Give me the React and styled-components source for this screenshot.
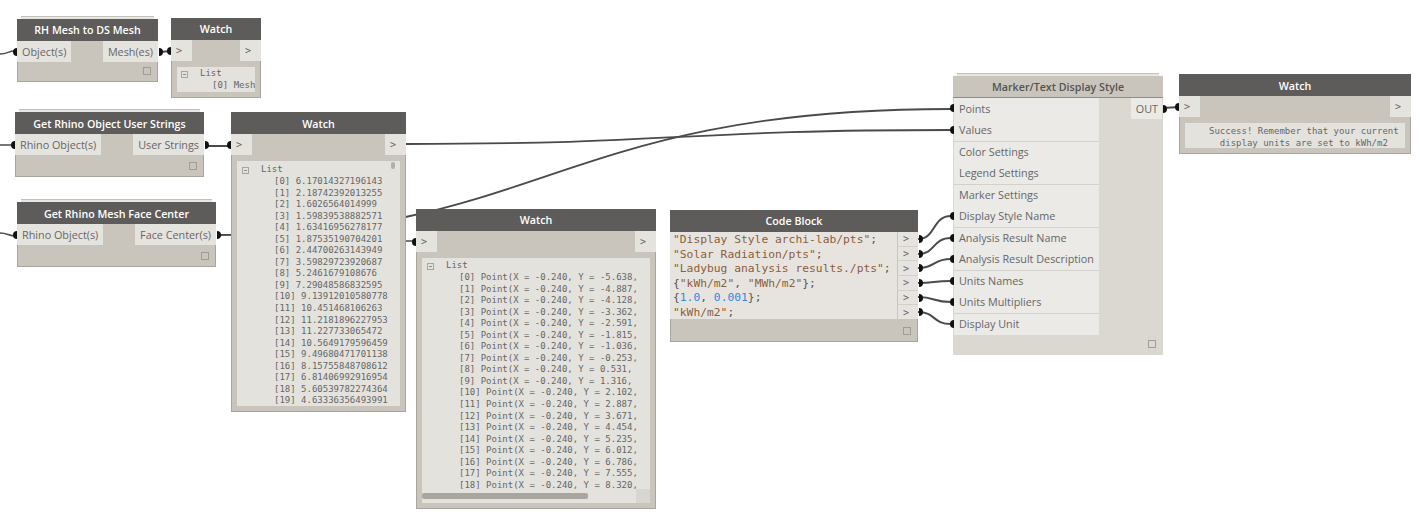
import React from "react";
import styled, { createGlobalStyle } from "styled-components";

const GlobalStyle = createGlobalStyle`
  html, body { margin: 0; padding: 0; background: #fff; }
  body { font-family: "Open Sans", "Liberation Sans", sans-serif; }
`;

const Canvas = styled.div`
  position: relative;
  width: 1420px;
  height: 521px;
  overflow: hidden;
  background: #fff;
`;

const WireLayer = styled.svg`
  position: absolute;
  left: 0;
  top: 0;
`;

/* nodes sit on a free canvas, so they are the one thing placed by coordinates */
const Node = styled.div`
  position: absolute;
  left: ${(p) => p.$x}px;
  top: ${(p) => p.$y}px;
  width: ${(p) => p.$w}px;
  height: ${(p) => p.$h}px;
  box-sizing: border-box;
  display: flex;
  flex-direction: column;
  background: ${(p) => (p.$light ? "#dbd8d2" : "#c9c5bd")};
  border: 1px solid ${(p) => (p.$light ? "#dbd8d2" : "#a8a59f")};
  border-top: none;

  ${(p) =>
    p.$stacked &&
    `&::before {
      content: "";
      position: absolute;
      left: 3px;
      right: 3px;
      top: -3px;
      height: 2px;
      background: #e8e6e2;
      border-top: 1px solid #c4c1bb;
    }`}
`;

const Header = styled.div`
  flex: none;
  height: 22px;
  box-sizing: border-box;
  margin: 0 -1px;
  display: flex;
  align-items: center;
  justify-content: center;
  padding-top: ${(p) => (p.$low ? 1 : 0)}px;
  padding-bottom: ${(p) => (p.$low || p.$light ? 0 : 1)}px;
  background: ${(p) => (p.$light ? "#c9c5bd" : "#5e5c5a")};
  border-bottom: ${(p) => (p.$light ? "1px solid #8f8c86" : "none")};
  color: ${(p) => (p.$light ? "#55534f" : "#fff")};
  font-size: 10.7px;
  font-weight: 600;
  white-space: nowrap;
`;

const PortRow = styled.div`
  flex: none;
  height: 21px;
  display: flex;
  justify-content: space-between;
`;

const Port = styled.div`
  position: relative;
  height: 21px;
  padding: 0 5px;
  display: flex;
  align-items: center;
  background: #e5e3de;
  color: #666;
  font-size: 10.8px;
  white-space: nowrap;
  ${(p) => p.$side === "out" && "margin-right: -1px;"}
  ${(p) => p.$side === "in" && "margin-left: -1px;"}
`;

const ArrowPort = styled(Port)`
  width: 21px;
  box-sizing: border-box;
  padding: 0 0 0 5px;
  font-family: "DejaVu Sans Mono", monospace;
  font-size: 10px;
`;

const Pin = styled.span`
  position: absolute;
  top: 50%;
  margin-top: -4px;
  width: 4px;
  height: 8px;
  background: #111;
  ${(p) =>
    p.$side === "in"
      ? "left: -4px; border-radius: 4px 0 0 4px;"
      : "right: -5px; border-radius: 0 4px 4px 0;"}
`;

const Footer = styled.div`
  flex: 1;
  display: flex;
  align-items: flex-end;
  justify-content: flex-end;
  padding: 0 6px 6px 0;
`;

const Grip = styled.span`
  width: 8px;
  height: 8px;
  box-sizing: border-box;
  border: 1px solid #a09d96;
`;

const ListPanel = styled.div`
  position: relative;
  flex: 1;
  margin: 6px 5px 5px;
  padding: ${(p) => p.$pad || "0"};
  background: #e4e2dd;
  overflow: hidden;
  font-family: "DejaVu Sans Mono", monospace;
  font-size: 9px;
  line-height: 11.55px;
  color: #666;
  white-space: pre;
`;

const ListHead = styled.div`
  display: flex;
  align-items: center;
  height: 12px;
  padding-left: ${(p) => p.$indent}px;
  gap: ${(p) => p.$gap}px;
`;

const Toggle = styled.span`
  position: relative;
  width: 7px;
  height: 7px;
  box-sizing: border-box;
  border: 1px solid #a8a59f;
  &::after {
    content: "";
    position: absolute;
    left: 1px;
    right: 1px;
    top: 2px;
    height: 1px;
    background: #8f8c86;
  }
`;

const ListRow = styled.div`
  padding-left: ${(p) => p.$indent}px;
`;

const ScrollDot = styled.span`
  position: absolute;
  right: 5px;
  top: 1px;
  width: 4px;
  height: 7px;
  border-radius: 2px;
  background: #b3b0aa;
`;

const HScroll = styled.div`
  position: absolute;
  left: 0;
  right: 0;
  bottom: 0;
  height: 14px;
  background: #e4e2dd;
`;

const HThumb = styled.span`
  position: absolute;
  left: 0;
  top: 4px;
  width: 166px;
  height: 6px;
  border-radius: 2px;
  background: #a9a6a0;
`;

const HCorner = styled.span`
  position: absolute;
  right: 0;
  top: 0;
  width: 14px;
  height: 14px;
  background: #d9d6d1;
`;

const CodeBody = styled.div`
  flex: none;
  height: 87px;
  display: flex;
  margin: 0 -1px;
`;

const CodeLines = styled.div`
  flex: 1;
  padding: 1px 0 0 3px;
  background: #e7e4e0;
  font-family: "DejaVu Sans Mono", monospace;
  font-size: 11.3px;
  line-height: 14.6px;
  color: #555;
  white-space: pre;
`;

const Str = styled.span`
  color: #8b5e3c;
`;

const Num = styled.span`
  color: #2f8ae0;
`;

const CodeOuts = styled.div`
  flex: none;
  width: 21px;
  display: flex;
  flex-direction: column;
`;

const CodeOut = styled.div`
  position: relative;
  flex: 1;
  display: flex;
  align-items: center;
  padding-left: 5px;
  background: #e7e4e0;
  border-left: 1px solid #c9c5bd;
  border-top: 1px solid #d3d0ca;
  font-family: "DejaVu Sans Mono", monospace;
  font-size: 10px;
  color: #666;
  &:first-child {
    border-top: none;
  }
`;

const MarkerColumns = styled.div`
  flex: 1;
  display: flex;
  justify-content: space-between;
  align-items: flex-start;
`;

const MarkerInputs = styled.div`
  width: 145px;
  padding-bottom: 0.4px;
  background: #ebeae6;
`;

const MarkerPort = styled.div`
  position: relative;
  top: -0.4px;
  height: 21.5px;
  box-sizing: border-box;
  padding-left: 5px;
  display: flex;
  align-items: center;
  color: #666;
  font-size: 10.8px;
  white-space: nowrap;
  ${(p) => p.$rule && "border-top: 1px solid #d3d1cb;"}
`;

const MarkerOut = styled(Port)`
  padding: 0 4px 0 5px;
  background: #ebeae6;
`;

const mesh = ["[0] Mesh"];
const strings = [
  "6.17014327196143", "2.18742392013255", "1.6026564014999", "1.59839538882571",
  "1.63416956278177", "1.87535190704201", "2.44700263143949", "3.59829723920687",
  "5.2461679108676", "7.29048586832595", "9.13912010580778", "10.451468106263",
  "11.2181896227953", "11.227733065472", "10.5649179596459", "9.49680471701138",
  "8.15755848708612", "6.81406992916954", "5.60539782274364", "4.63336356493991",
];
const pointY = [
  "-5.638", "-4.887", "-4.128", "-3.362", "-2.591", "-1.815", "-1.036", "-0.253", "0.531",
  "1.316", "2.102", "2.887", "3.671", "4.454", "5.235", "6.012", "6.786", "7.555", "8.320",
];

const wires = [
  ["M0,54 C8,54 8,51 15,51", 1.5],
  ["M160,52 L171,51", 2],
  ["M0,145 L15,145", 1.5],
  ["M206,146 L231,146", 2],
  ["M0,233 C8,233 8,236 16,236", 1.5],
  ["M218,235 C540,235 560,109 951,109", 1.8],
  ["M406,144 C680,144 680,130 951,130", 1.8],
  ["M406,241 L416,241", 1.5],
  ["M918,239 C936,239 932,216 951,216", 2],
  ["M918,254 C936,254 932,238 951,238", 2],
  ["M918,268 C936,268 932,259 951,259", 2],
  ["M918,283 C936,283 932,281 951,281", 2],
  ["M918,297 C936,297 932,302 951,302", 2],
  ["M918,312 C936,312 932,324 951,324", 2],
  ["M1163,108 L1179,107", 2],
];

const markerInputs = [
  ["Points", true, false],
  ["Values", true, false],
  ["Color Settings", false, true],
  ["Legend Settings", false, false],
  ["Marker Settings", false, true],
  ["Display Style Name", true, false],
  ["Analysis Result Name", true, true],
  ["Analysis Result Description", true, false],
  ["Units Names", true, true],
  ["Units Multipliers", true, false],
  ["Display Unit", true, true],
];

const Arrows = ({ pinned }) => (
  <PortRow>
    <ArrowPort $side="in">
      {pinned && <Pin $side="in" />}
      &gt;
    </ArrowPort>
    <ArrowPort $side="out">&gt;</ArrowPort>
  </PortRow>
);

const Ports = ({ input, output }) => (
  <PortRow>
    <Port $side="in">
      <Pin $side="in" />
      {input}
    </Port>
    <Port $side="out">
      {output}
      <Pin $side="out" />
    </Port>
  </PortRow>
);

export default function App() {
  return (
    <Canvas>
      <GlobalStyle />
      <WireLayer width="1420" height="521" fill="none">
        {wires.map(([d, w]) => (
          <path key={d} d={d} stroke="#4a4a4a" strokeWidth={w} />
        ))}
      </WireLayer>

      <Node $x={17} $y={19} $w={141} $h={63} $stacked>
        <Header>RH Mesh to DS Mesh</Header>
        <Ports input="Object(s)" output="Mesh(es)" />
        <Footer><Grip /></Footer>
      </Node>

      <Node $x={171} $y={18} $w={90} $h={80}>
        <Header>Watch</Header>
        <Arrows pinned />
        <ListPanel $pad="1px 0 0">
          <ListHead $indent={4} $gap={12}><Toggle />List</ListHead>
          {mesh.map((m) => <ListRow key={m} $indent={35}>{m}</ListRow>)}
        </ListPanel>
      </Node>

      <Node $x={15} $y={112} $w={189} $h={65} $stacked>
        <Header $low>Get Rhino Object User Strings</Header>
        <Ports input="Rhino Object(s)" output="User Strings" />
        <Footer><Grip /></Footer>
      </Node>

      <Node $x={17} $y={202} $w={199} $h={65} $stacked>
        <Header $low>Get Rhino Mesh Face Center</Header>
        <Ports input="Rhino Object(s)" output="Face Center(s)" />
        <Footer><Grip /></Footer>
      </Node>

      <Node $x={231} $y={112} $w={175} $h={300}>
        <Header $low>Watch</Header>
        <Arrows pinned />
        <ListPanel $pad="3px 0 0">
          <ScrollDot />
          <ListHead $indent={5} $gap={12}><Toggle />List</ListHead>
          {strings.map((s, i) => (
            <ListRow key={s} $indent={37}>{`[${i}] ${s}`}</ListRow>
          ))}
        </ListPanel>
      </Node>

      <Node $x={416} $y={209} $w={240} $h={300}>
        <Header>Watch</Header>
        <Arrows pinned />
        <ListPanel $pad="2px 0 0">
          <ListHead $indent={5} $gap={12}><Toggle />List</ListHead>
          {pointY.map((y, i) => (
            <ListRow key={i} $indent={37}>{`[${i}] Point(X = -0.240, Y = ${y},`}</ListRow>
          ))}
          <HScroll>
            <HThumb />
            <HCorner />
          </HScroll>
        </ListPanel>
      </Node>

      <Node $x={670} $y={210} $w={248} $h={132}>
        <Header>Code Block</Header>
        <CodeBody>
          <CodeLines>
            <Str>"Display Style archi-lab/pts"</Str>;{"\n"}
            <Str>"Solar Radiation/pts"</Str>;{"\n"}
            <Str>"Ladybug analysis results./pts"</Str>;{"\n"}
            {"{"}<Str>"kWh/m2"</Str>, <Str>"MWh/m2"</Str>{"};"}{"\n"}
            {"{"}<Num>1.0</Num>, <Num>0.001</Num>{"};"}{"\n"}
            <Str>"kWh/m2"</Str>;
          </CodeLines>
          <CodeOuts>
            {[0, 1, 2, 3, 4, 5].map((i) => (
              <CodeOut key={i}>&gt;<Pin $side="out" /></CodeOut>
            ))}
          </CodeOuts>
        </CodeBody>
        <Footer><Grip /></Footer>
      </Node>

      <Node $x={953} $y={76} $w={210} $h={279} $light $stacked>
        <Header $light>Marker/Text Display Style</Header>
        <MarkerColumns>
          <MarkerInputs>
            {markerInputs.map(([label, pinned, rule]) => (
              <MarkerPort key={label} $rule={rule}>
                {pinned && <Pin $side="in" />}
                {label}
              </MarkerPort>
            ))}
          </MarkerInputs>
          <MarkerOut>
            OUT
            <Pin $side="out" />
          </MarkerOut>
        </MarkerColumns>
        <Footer><Grip /></Footer>
      </Node>

      <Node $x={1179} $y={74} $w={232} $h={80}>
        <Header $low>Watch</Header>
        <Arrows pinned />
        <ListPanel $pad="3px 0 0 24px">
          {"Success! Remember that your current\n  display units are set to kWh/m2"}
        </ListPanel>
      </Node>
    </Canvas>
  );
}
